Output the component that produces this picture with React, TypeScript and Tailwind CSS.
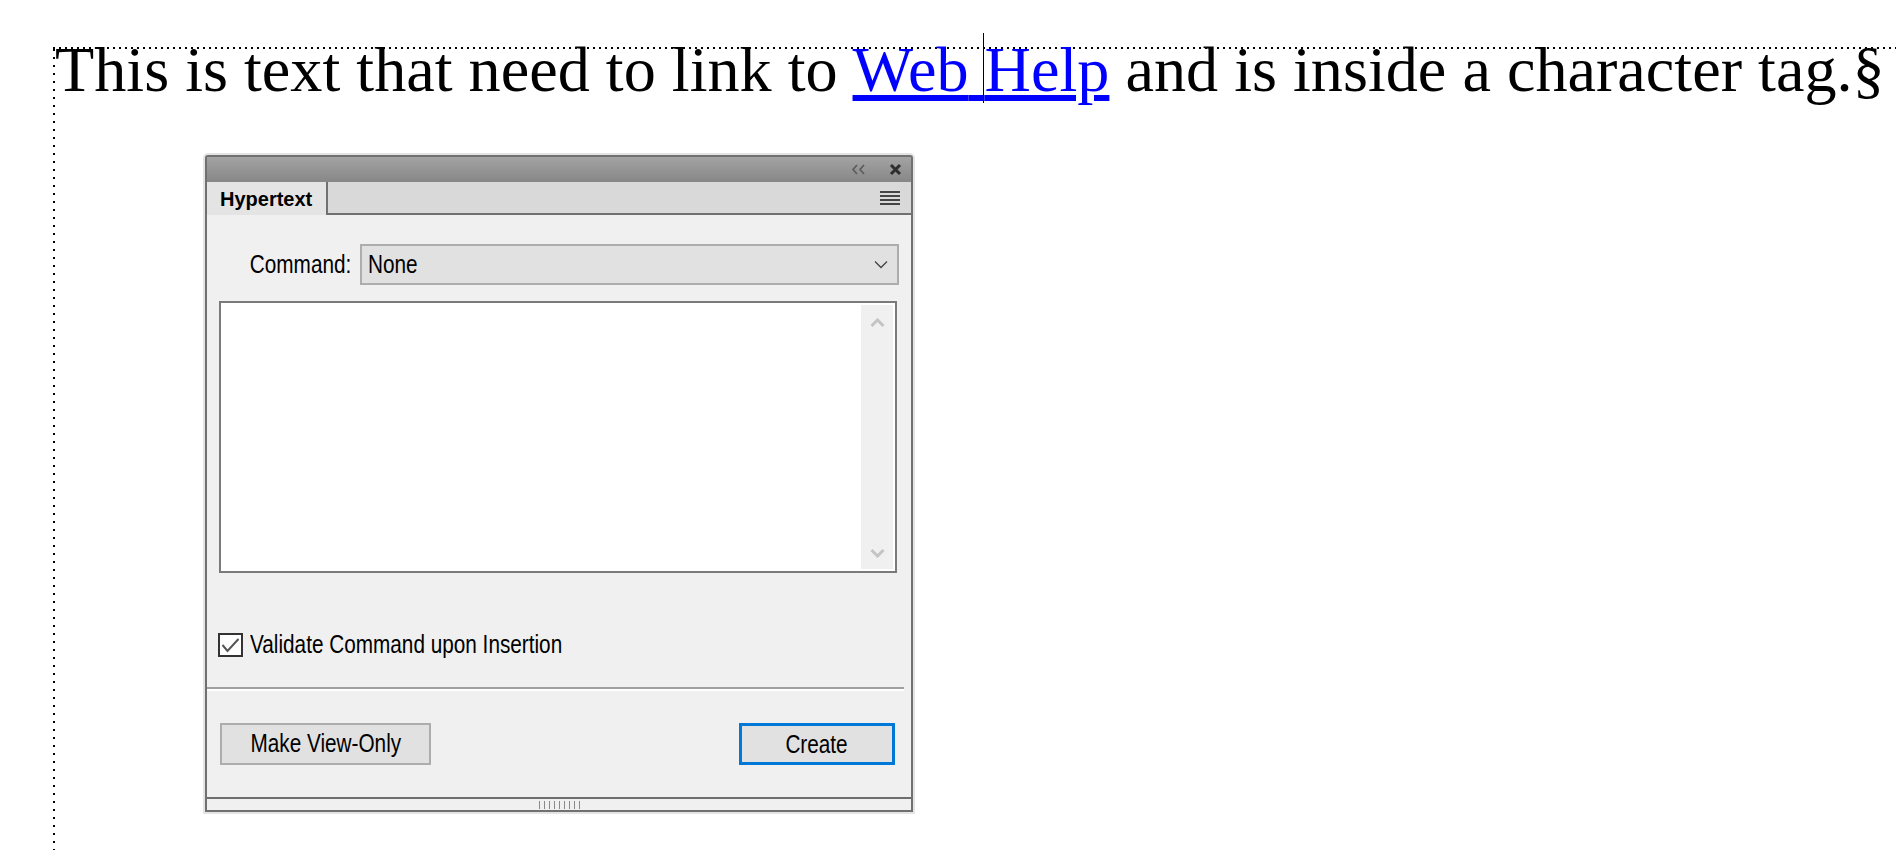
const ui = "font-['Liberation_Sans',sans-serif]"
// the dialog font is a tall condensed face; squeeze Liberation Sans to match its widths
const narrow = 'inline-block scale-x-[0.83]'

function Chevrons() {
  return (
    <svg width="16" height="11" viewBox="0 0 16 11" className="mr-[22px]">
      <polyline points="6,1 2,5.5 6,10" fill="none" stroke="#5a5a5a" strokeWidth="1.6" />
      <polyline points="13,1 9,5.5 13,10" fill="none" stroke="#5a5a5a" strokeWidth="1.6" />
    </svg>
  )
}

function CloseIcon() {
  return (
    <svg width="13" height="13" viewBox="0 0 13 13">
      <path d="M2 2 L11 11 M11 2 L2 11" stroke="#2e2e2e" strokeWidth="3" />
    </svg>
  )
}

function MenuIcon() {
  return (
    <div className="flex flex-col gap-[2px] w-[20px]">
      <div className="h-[2px] bg-[#444]" />
      <div className="h-[2px] bg-[#444]" />
      <div className="h-[2px] bg-[#444]" />
      <div className="h-[2px] bg-[#444]" />
    </div>
  )
}

function ScrollArrow({ down }: { down?: boolean }) {
  return (
    <svg width="15" height="10" viewBox="0 0 15 10">
      <polyline
        points={down ? '1.5,2 7.5,8 13.5,2' : '1.5,8 7.5,2 13.5,8'}
        fill="none"
        stroke="#c4c4c4"
        strokeWidth="3"
      />
    </svg>
  )
}

export default function App() {
  return (
    <div className="w-[1896px] h-[850px] bg-white overflow-hidden">
      <div className="ml-[53px] mt-[47px]">
        {/* dotted text-frame edges */}
        <div className="h-[2px] bg-[repeating-linear-gradient(90deg,#000_0_2px,transparent_2px_6px)]" />
        <div className="flex h-[801px]">
          <div className="w-[2px] shrink-0 bg-[repeating-linear-gradient(180deg,#000_0_2px,transparent_2px_8px)]" />
          <div className="flex-1">
            <p className="font-['Liberation_Serif',serif] text-[64.2px] leading-[41px] whitespace-nowrap text-black">
              This is text that need to link to{' '}
              <span className="text-[#0000ff] underline">
                Web{' '}
                <span className="relative">
                  <span className="absolute left-[-2px] top-[-1px] w-px h-[70px] bg-black" />
                </span>
                Help
              </span>{' '}
              and is inside a character tag.§
            </p>

            <div
              className={`${ui} ml-[150px] mt-[65px] w-[708px] h-[657px] flex flex-col border-2 border-[#707070] rounded-t-[3px] bg-[#f0f0f0] text-black shadow-[0_0_0_2px_#e4e4e4]`}
            >
              {/* title bar */}
              <div className="h-[25px] flex items-center justify-end pr-[9px] bg-gradient-to-b from-[#a3a3a3] to-[#878787]">
                <Chevrons />
                <CloseIcon />
              </div>

              {/* tab strip */}
              <div className="h-[33px] flex bg-[#d9d9d9]">
                <div className="w-[121px] bg-[#e4e4e4] border-r-2 border-[#707070] flex items-center pl-[13px] font-bold text-[20px]">
                  Hypertext
                </div>
                <div className="flex-1 flex items-center justify-end pr-[11px] border-b-2 border-[#707070]">
                  <MenuIcon />
                </div>
              </div>

              {/* body */}
              <div className="flex-1 flex flex-col pt-[29px] text-[25px]">
                <div className="h-[41px] flex items-center">
                  <div className="w-[144px] text-right">
                    <span className={`${narrow} origin-right`}>Command:</span>
                  </div>
                  <div className="ml-[9px] w-[539px] h-full flex items-center justify-between bg-[#e1e1e1] border-2 border-[#adadad] pl-[6px] pr-[9px]">
                    <span className={`${narrow} origin-left`}>None</span>
                    <svg width="14" height="9" viewBox="0 0 14 9">
                      <polyline points="1,1.5 7,7.5 13,1.5" fill="none" stroke="#444" strokeWidth="1.3" />
                    </svg>
                  </div>
                </div>

                <div className="mt-[16px] ml-[12px] w-[678px] h-[272px] border-2 border-[#7a7a7a] bg-white flex justify-end p-[2px]">
                  <div className="w-[32px] bg-[#f0f0f0] flex flex-col items-center justify-between pt-[13px] pb-[11px]">
                    <ScrollArrow />
                    <ScrollArrow down />
                  </div>
                </div>

                <div className="mt-[60px] ml-[11px] h-[24px] flex items-center">
                  <div className="w-[25px] h-[24px] shrink-0 border-2 border-[#333] bg-white flex items-center justify-center">
                    <svg width="19" height="16" viewBox="0 0 19 16">
                      <polyline points="1.5,8 6.5,14 17.5,2" fill="none" stroke="#555" strokeWidth="2" />
                    </svg>
                  </div>
                  <span className={`${narrow} origin-left ml-[7px] whitespace-nowrap`}>
                    Validate Command upon Insertion
                  </span>
                </div>

                <div className="mt-[30px] w-[697px]">
                  <div className="h-[2px] bg-[#a0a0a0]" />
                  <div className="h-[2px] bg-white" />
                </div>

                <div className="mt-[32px] h-[42px] flex">
                  <button className="ml-[13px] w-[211px] h-full bg-[#e1e1e1] border-2 border-[#adadad]">
                    <span className={`${narrow} whitespace-nowrap`}>Make View-Only</span>
                  </button>
                  <button className="ml-auto mr-[16px] w-[156px] h-full bg-[#e1e1e1] border-[3px] border-[#0078d7]">
                    <span className={narrow}>Create</span>
                  </button>
                </div>
              </div>

              {/* resize grip */}
              <div className="h-[13px] border-t-2 border-[#6e6e6e] flex items-center justify-center gap-[4px]">
                {[0, 1, 2, 3, 4, 5, 6, 7, 8].map((i) => (
                  <div key={i} className="w-px h-[8px] bg-[#8a8a8a]" />
                ))}
              </div>
            </div>
          </div>
        </div>
      </div>
    </div>
  )
}
